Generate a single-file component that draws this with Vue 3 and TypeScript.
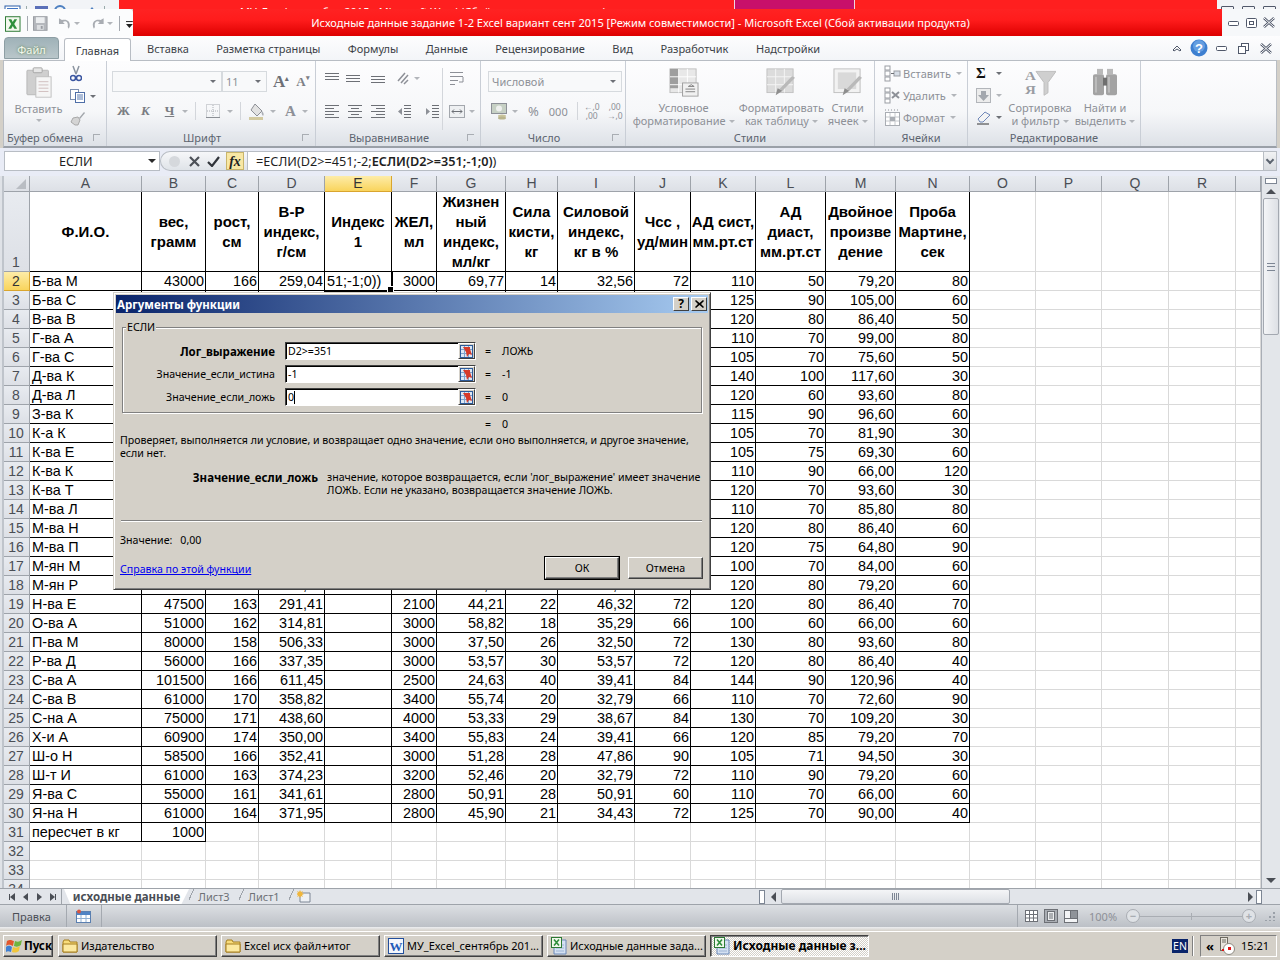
<template>
  <div class="app">
    <!-- окно позади -->
    <div class="back-strip">
      <div class="back-left">
        <svg width="119" height="9" viewBox="0 0 119 9">
          <rect x="5" y="3" width="15" height="8" fill="#fff" stroke="#2a5ca8" />
          <rect x="7" y="5" width="11" height="4" fill="#3f74c4" />
          <rect x="26" y="3" width="1" height="6" fill="#9aa" />
          <rect x="35" y="3" width="13" height="8" fill="#5a6fb8" />
          <circle cx="60" cy="8" r="5" fill="none" stroke="#4c7fc0" stroke-width="2" />
          <path d="M88 9l4-5 4 5z" fill="#4c7fc0" />
          <rect x="104" y="3" width="1" height="6" fill="#9aa" />
        </svg>
      </div>
      <div class="back-red">
        <span class="back-title">МУ_Excel_сентябрь 2015  -  Microsoft Word (Сбой активации продукта)</span>
        <div class="back-pink"></div>
      </div>
      <div class="back-right"><span></span><span></span><span></span></div>
    </div>

    <!-- заголовок окна -->
    <div class="titlebar">
      <div class="qat">
        <svg class="xl-logo" width="16" height="16" viewBox="0 0 16 16">
          <rect x="0.5" y="0.5" width="15" height="15" fill="#f3f8ee" stroke="#2c7a34" />
          <path d="M3.5 3h3l1.5 3 1.6-3h2.9l-3 5 3 5H9.700L8 10 6.400 13h-3l3-5z" fill="#2f8f3c" />
        </svg>
        <i class="qat-sep"></i>
        <svg width="15" height="15" viewBox="0 0 15 15">
          <rect x="0.5" y="0.5" width="14" height="14" fill="#b4b7bc" stroke="#9a9da3" />
          <rect x="3" y="1" width="9" height="6" fill="#eceef0" />
          <rect x="4" y="9" width="7" height="5" fill="#dcdee1" />
          <rect x="8" y="10" width="2" height="3" fill="#9a9da3" />
        </svg>
        <svg class="qat-undo" width="13" height="13" viewBox="0 0 13 13">
          <path d="M1 1v6h6L5 5c3-2 6 0 5 5l1 2c3-5 0-11-7-9z" fill="#a9adb3" />
        </svg>
        <i class="dd small"></i>
        <svg class="qat-redo" width="13" height="13" viewBox="0 0 13 13">
          <path d="M12 1v6H6l2-2C5 3 2 5 3 10l-1 2C-1 7 2 1 9 3z" fill="#a9adb3" />
        </svg>
        <i class="dd small"></i>
        <i class="qat-sep"></i>
        <svg width="7" height="8" viewBox="0 0 7 8"><rect y="1" width="7" height="1" fill="#222" /><path d="M0 4h7L3.500 8z" fill="#222" /></svg>
      </div>
      <div class="title-red">Исходные данные задание 1-2 Excel вариант сент 2015  [Режим совместимости]  -  Microsoft Excel (Сбой активации продукта)</div>
      <div class="winbtns">
        <svg width="12" height="8" viewBox="0 0 12 8"><rect x="0.5" y="2.500" width="10" height="4" rx="1" fill="#fff" stroke="#50586a" /></svg>
        <svg width="11" height="10" viewBox="0 0 11 10"><rect x="0.5" y="0.500" width="10" height="9" rx="1" fill="#fff" stroke="#50586a" /><rect x="3.500" y="3.500" width="4" height="3" fill="none" stroke="#50586a" /></svg>
        <svg width="12" height="11" viewBox="0 0 12 11"><path d="M1 1l10 9M11 1L1 10" stroke="#50586a" stroke-width="2.500" /><path d="M1 1l10 9M11 1L1 10" stroke="#fff" stroke-width="1" /></svg>
      </div>
    </div>

    <!-- вкладки ленты -->
    <div class="tabs">
      <div class="tab-file">Файл</div>
      <div class="tab-home">Главная</div>
      <div class="tab-list">
        <span v-for="t in ribbonTabs" :key="t">{{ t }}</span>
      </div>
      <div class="tab-tools">
        <svg width="10" height="8" viewBox="0 0 10 8"><path d="M1 6l4-4 4 4-1 1-3-2-3 2z" fill="#fff" stroke="#50586a" /></svg>
        <svg class="tt-help" width="18" height="18" viewBox="0 0 18 18">
          <circle cx="9" cy="9" r="8.500" fill="#3d7fd0" />
          <circle cx="9" cy="7" r="6" fill="#7fb3ec" opacity="0.6" />
          <text x="9" y="14" text-anchor="middle" class="help-q">?</text>
        </svg>
        <svg width="11" height="7" viewBox="0 0 11 7"><rect x="0.5" y="1.500" width="10" height="4" rx="1" fill="#fff" stroke="#50586a" /></svg>
        <svg width="11" height="11" viewBox="0 0 11 11"><rect x="3.500" y="0.500" width="7" height="7" fill="#fff" stroke="#50586a" /><rect x="0.500" y="3.500" width="7" height="7" fill="#fff" stroke="#50586a" /></svg>
        <svg width="12" height="11" viewBox="0 0 12 11"><path d="M1 1l10 9M11 1L1 10" stroke="#50586a" stroke-width="2.500" /><path d="M1 1l10 9M11 1L1 10" stroke="#fff" stroke-width="1" /></svg>
      </div>
    </div>

    <!-- лента -->
    <div class="ribbon">
      <section class="group g-clip">
        <div class="g-body">
          <div class="paste">
            <svg width="26" height="31" viewBox="0 0 29 38" preserveAspectRatio="none">
              <rect x="1" y="4" width="24" height="30" rx="1" fill="#cfcfcf" stroke="#b4b4b4" />
              <rect x="8" y="1" width="10" height="6" rx="1" fill="#e6e6e6" stroke="#9f9f9f" />
              <rect x="11" y="12" width="17" height="25" fill="#f5f5f5" stroke="#bcbcbc" />
              <path d="M14 18h11M14 22h11M14 26h11M14 30h11" stroke="#cbb8b8" />
            </svg>
            <span>Вставить</span>
            <i class="dd small"></i>
          </div>
          <div class="clip-col">
            <svg width="12" height="17" viewBox="0 0 12 17">
              <path d="M3 1l3 8M9 1L6 9" stroke="#8b94a0" stroke-width="1.500" />
              <circle cx="3" cy="13" r="2.500" fill="none" stroke="#3a55a0" stroke-width="1.500" />
              <circle cx="9" cy="13" r="2.500" fill="none" stroke="#3a55a0" stroke-width="1.500" />
            </svg>
            <div class="row-dd">
              <svg width="15" height="14" viewBox="0 0 15 14">
                <rect x="0.500" y="0.500" width="8" height="10" fill="#fff" stroke="#7c8fb0" />
                <rect x="5.500" y="3.500" width="9" height="10" fill="#fff" stroke="#4f6fa8" />
                <path d="M7 6h6M7 8h6M7 10h6" stroke="#5a7ab0" />
              </svg>
              <i class="dd"></i>
            </div>
            <svg width="16" height="16" viewBox="0 0 16 16">
              <path d="M9 8l5-6 1 1-5 6z" fill="#a2a6ab" />
              <path d="M3 8l5-1 2 3-2 5H5l-4-3z" fill="#d4d4d4" stroke="#a8a8a8" />
            </svg>
          </div>
        </div>
        <div class="g-label left">Буфер обмена<i class="launch"></i></div>
      </section>

      <section class="group g-font">
        <div class="g-body col">
          <div class="f-row1">
            <div class="combo w-font"><i class="dd dark"></i></div>
            <div class="combo w-size"><span>11</span><i class="dd dark"></i></div>
            <span class="big-a">A<sup>▴</sup></span>
            <span class="small-a">A<sup>▾</sup></span>
          </div>
          <div class="f-row2">
            <b class="fb">Ж</b>
            <b class="fb fi">К</b>
            <b class="fb fu">Ч</b><i class="dd small ml1"></i>
            <i class="vsep"></i>
            <svg class="ml3" width="14" height="14" viewBox="0 0 14 14">
              <rect x="0.500" y="0.500" width="13" height="13" fill="none" stroke="#a9adb3" stroke-dasharray="1 1" />
              <path d="M7 1v12M1 7h12" stroke="#a9adb3" stroke-dasharray="1 1" />
              <path d="M0 13.500h14" stroke="#8b8f95" />
            </svg>
            <i class="dd small ml2"></i>
            <i class="vsep"></i>
            <svg class="ml1" width="16" height="17" viewBox="0 0 16 17">
              <path d="M6 1l7 7-5 5-6-6z" fill="#e2e2e2" stroke="#8d9097" />
              <path d="M13 8c2 2 2 4 1 5-1-1-2-3-1-5z" fill="#a9adb3" />
              <rect x="0" y="14" width="14" height="3" fill="#d2c9a0" />
            </svg>
            <i class="dd small"></i>
            <span class="font-color">A</span>
            <i class="dd small ml1"></i>
          </div>
        </div>
        <div class="g-label lb">Шрифт<i class="launch"></i></div>
      </section>

      <section class="group g-align">
        <div class="g-body al-wrap">
          <div class="al-main">
            <div class="al-row">
              <svg class="al" width="14" height="10" viewBox="0 0 14 10"><path d="M0 .5h14M0 3.500h14M0 6.500h14" stroke="#6d7076" /></svg>
              <svg class="ml7" width="14" height="10" viewBox="0 0 14 10"><path d="M0 2.500h14M0 5.500h14M0 8.500h14" stroke="#6d7076" /></svg>
              <svg class="ml11" width="14" height="10" viewBox="0 0 14 10"><path d="M0 3.500h14M0 6.500h14M0 9.500h14" stroke="#6d7076" /></svg>
              <svg class="ml11" width="16" height="14" viewBox="0 0 16 14"><path d="M2 10l7-8M5 12l7-8M8 13l4-4" stroke="#8d9097" stroke-width="1.500" /></svg>
              <i class="dd small ml2"></i>
            </div>
            <div class="al-row">
              <svg class="al" width="14" height="13" viewBox="0 0 14 13"><path d="M0 .5h14M0 3.500h9M0 6.500h14M0 9.500h9M0 12.500h14" stroke="#6d7076" /></svg>
              <svg class="ml9" width="14" height="13" viewBox="0 0 14 13"><path d="M0 .5h14M3 3.500h8M0 6.500h14M3 9.500h8M0 12.500h14" stroke="#6d7076" /></svg>
              <svg class="ml9" width="14" height="13" viewBox="0 0 14 13"><path d="M0 .5h14M5 3.500h9M0 6.500h14M5 9.500h9M0 12.500h14" stroke="#6d7076" /></svg>
              <svg class="ml12" width="14" height="13" viewBox="0 0 14 13"><path d="M7 .5h7M7 3.500h7M7 6.500h7M7 9.500h7M7 12.500h7" stroke="#6d7076" /><path d="M5 3L1 6.500 5 10z" fill="#8d9097" /></svg>
              <svg class="ml14" width="14" height="13" viewBox="0 0 14 13"><path d="M7 .5h7M7 3.500h7M7 6.500h7M7 9.500h7M7 12.500h7" stroke="#6d7076" /><path d="M1 3l4 3.500L1 10z" fill="#8d9097" /></svg>
            </div>
          </div>
          <i class="al-line"></i>
          <div class="al-side">
            <div class="al-row">
              <svg width="16" height="15" viewBox="0 0 16 15"><path d="M1 1.500h13M1 5.500h13M1 9.500h8M1 13.500h5" stroke="#8d9097" /><path d="M14 6v5h-4" fill="none" stroke="#8d9097" /></svg>
            </div>
            <div class="al-row">
              <svg width="16" height="13" viewBox="0 0 16 13"><rect x="0.500" y="0.500" width="15" height="12" fill="#eef0f2" stroke="#a3a7ad" /><path d="M3 6.500h10M3 6.500l2-2M3 6.500l2 2M13 6.500l-2-2M13 6.500l-2 2" stroke="#6d7076" /></svg>
              <i class="dd small ml4"></i>
            </div>
          </div>
        </div>
        <div class="g-label lb">Выравнивание<i class="launch"></i></div>
      </section>

      <section class="group g-num">
        <div class="g-body col">
          <div class="combo w-num"><span>Числовой</span><i class="dd dark"></i></div>
          <div class="n-row">
            <svg width="16" height="17" viewBox="0 0 16 17">
              <rect x="0.500" y="0.500" width="15" height="10" fill="#c6d0c4" stroke="#8d9097" />
              <circle cx="8" cy="5.500" r="3" fill="#eef0ee" />
              <ellipse cx="11" cy="13" rx="4" ry="1.500" fill="#c9c49c" />
              <ellipse cx="11" cy="15" rx="4" ry="1.500" fill="#b9b48c" />
            </svg>
            <i class="dd small"></i>
            <span class="n-pct">%</span>
            <span class="n-000">000</span>
            <i class="vsep n-vsep"></i>
            <span class="n-dec">←,0<br />,00</span>
            <span class="n-dec">,00<br />→,0</span>
          </div>
        </div>
        <div class="g-label lb">Число<i class="launch"></i></div>
      </section>

      <section class="group g-styles">
        <div class="g-body styles-row">
          <div class="big st1">
            <svg width="30" height="29" viewBox="0 0 31 33" preserveAspectRatio="none">
              <rect x="1" y="1" width="27" height="27" fill="#e8e8e8" stroke="#bdbdbd" />
              <rect x="1" y="1" width="9" height="22" fill="#9e9e9e" />
              <path d="M10 1v27M19 1v27M1 10h27M1 19h27" stroke="#fff" />
              <rect x="14" y="17" width="16" height="15" fill="#f1f1f1" stroke="#9e9e9e" />
              <path d="M20 21h6l-3-2zM17 24h10M17 27h10" stroke="#7f7f7f" fill="none" />
            </svg>
            <span>Условное<br />форматирование<i class="dd small in"></i></span>
          </div>
          <div class="big st2">
            <svg width="30" height="29" viewBox="0 0 31 33" preserveAspectRatio="none">
              <rect x="1" y="1" width="27" height="27" fill="#dcdcdc" stroke="#c0c0c0" />
              <path d="M1 10h27M1 19h27M10 1v27M19 1v27" stroke="#f5f5f5" />
              <path d="M30 11L17 26l-3-2L27 9z" fill="#b9b9b9" />
              <path d="M17 26l-7 5 2-8z" fill="#8e8e8e" />
            </svg>
            <span>Форматировать<br />как таблицу<i class="dd small in"></i></span>
          </div>
          <div class="big st3">
            <svg width="30" height="29" viewBox="0 0 31 33" preserveAspectRatio="none">
              <rect x="1" y="1" width="27" height="27" fill="#f2f2f2" stroke="#bdbdbd" />
              <rect x="5" y="5" width="19" height="19" fill="#d9d9d9" />
              <path d="M30 11L17 26l-3-2L27 9z" fill="#b9b9b9" />
              <path d="M17 26l-7 5 2-8z" fill="#8e8e8e" />
            </svg>
            <span>Стили<br />ячеек<i class="dd small in"></i></span>
          </div>
        </div>
        <div class="g-label">Стили</div>
      </section>

      <section class="group g-cells">
        <div class="g-body col cells-col">
          <div class="c-item">
            <svg width="17" height="17" viewBox="0 0 17 17"><rect x="1" y="1" width="5" height="4" fill="#fff" stroke="#9a9da3" /><rect x="1" y="6" width="5" height="5" fill="#fff" stroke="#9a9da3" /><rect x="1" y="12" width="5" height="4" fill="#fff" stroke="#9a9da3" /><rect x="10" y="6" width="6" height="5" fill="#d6dde6" stroke="#9a9da3" /><path d="M7 8.500h3" stroke="#6d7076" /></svg>
            <span>Вставить</span><i class="dd small"></i>
          </div>
          <div class="c-item">
            <svg width="17" height="17" viewBox="0 0 17 17"><rect x="1" y="1" width="5" height="4" fill="#fff" stroke="#9a9da3" /><rect x="1" y="6" width="5" height="5" fill="#fff" stroke="#9a9da3" /><rect x="1" y="12" width="5" height="4" fill="#fff" stroke="#9a9da3" /><path d="M8 5l7 6M15 5l-7 6" stroke="#8d9097" stroke-width="2" /></svg>
            <span>Удалить</span><i class="dd small"></i>
          </div>
          <div class="c-item">
            <svg width="17" height="17" viewBox="0 0 17 17"><rect x="1.500" y="3.500" width="14" height="13" fill="#fff" stroke="#a9adb3" /><path d="M6 4v12M11 4v12M2 8h13M2 12h13" stroke="#c5c8cc" /><rect x="6" y="8" width="5" height="4" fill="#a9adb3" /><path d="M1 1h15" stroke="#8d9097" stroke-dasharray="1 2" /></svg>
            <span>Формат</span><i class="dd small"></i>
          </div>
        </div>
        <div class="g-label">Ячейки</div>
      </section>

      <section class="group g-edit">
        <div class="g-body edit-row">
          <div class="edit-col">
            <div class="row-dd"><span class="sigma">Σ</span><i class="dd dark"></i></div>
            <div class="row-dd">
              <svg width="15" height="15" viewBox="0 0 15 15"><rect x="0.500" y="0.500" width="14" height="14" fill="#ececec" stroke="#b2b5ba" /><path d="M5 3h5v4h3l-5.500 6L2 7h3z" fill="#a3a7ad" /></svg>
              <i class="dd small"></i>
            </div>
            <div class="row-dd">
              <svg width="15" height="15" viewBox="0 0 15 15"><path d="M2 9l7-7 5 3-7 7H4z" fill="#f4f4f4" stroke="#6f87b8" /><path d="M1 14h12" stroke="#333" /></svg>
              <i class="dd dark"></i>
            </div>
          </div>
          <div class="big ed1">
            <svg width="32" height="29" viewBox="0 0 32 34" preserveAspectRatio="none">
              <text x="1" y="14" class="sort-a">А</text>
              <text x="1" y="31" class="sort-a">Я</text>
              <path d="M12 4h20L24 17v12l-4 3V17z" fill="#cfcfcf" stroke="#bcbcbc" />
            </svg>
            <span>Сортировка<br />и фильтр<i class="dd small in"></i></span>
          </div>
          <div class="big ed2">
            <svg width="30" height="29" viewBox="0 0 30 33" preserveAspectRatio="none">
              <rect x="7" y="1" width="6" height="6" fill="#b9b9b9" />
              <rect x="17" y="1" width="6" height="6" fill="#b9b9b9" />
              <rect x="3" y="7" width="11" height="24" rx="2" fill="#a3a3a3" />
              <rect x="16" y="7" width="11" height="24" rx="2" fill="#a3a3a3" />
              <rect x="13" y="11" width="4" height="9" fill="#6f6f6f" />
              <path d="M6 10v18M19 10v18" stroke="#d8d8d8" />
            </svg>
            <span>Найти и<br />выделить<i class="dd small in"></i></span>
          </div>
        </div>
        <div class="g-label">Редактирование</div>
      </section>
    </div>

    <!-- строка формул -->
    <div class="formula-bar">
      <div class="name-box"><span>ЕСЛИ</span><i class="dd black"></i></div>
      <div class="fx-tools">
        <span class="fx-knob"></span>
        <svg width="11" height="11" viewBox="0 0 11 11"><path d="M1 1l9 9M10 1l-9 9" stroke="#4d5158" stroke-width="2.200" /></svg>
        <svg class="fx-ok" width="13" height="11" viewBox="0 0 13 11"><path d="M1 6l4 4 7-9" fill="none" stroke="#30343a" stroke-width="2.200" /></svg>
        <span class="fx-btn">fx</span>
      </div>
      <div class="formula-text">=ЕСЛИ(D2&gt;=451;-2;<b>ЕСЛИ(D2&gt;=351;-1;0)</b>)</div>
      <div class="formula-exp"><i class="chev"></i></div>
    </div>

    <!-- лист -->
    <div class="sheet-area">
      <div class="frame-left"></div>
      <div class="sheet">
        <div class="ch corner"><i></i></div>
        <div v-for="(c, i) in columns" :key="c" class="ch" :class="{ active: i === 4 }">{{ c }}</div>

        <div class="rh tall"><span>1</span></div>
        <div v-for="(h, i) in headers" :key="'h' + i" class="cell head">{{ h }}</div>
        <div v-for="i in 5" :key="'e1' + i" class="cell"></div>

        <template v-for="(row, r) in tableRows" :key="r">
          <div class="rh" :class="{ active: r === 0 }">{{ r + 2 }}</div>
          <div
            v-for="(v, c) in row.cells"
            :key="c"
            class="cell"
            :class="{ boxed: row.boxed > c, num: c > 0, edit: r === 0 && c === 4 }"
          >
            <template v-if="r === 0 && c === 4">
              <span class="edit-text">51;-1;0))</span><i class="handle"></i>
            </template>
            <template v-else>{{ v }}</template>
          </div>
        </template>
      </div>
      <div class="vscroll">
        <i class="split-v"></i>
        <i class="arr up"></i>
        <div class="vthumb"><i></i></div>
        <div class="vtrack"></div>
        <i class="arr down"></i>
      </div>
    </div>

    <!-- ярлыки листов -->
    <div class="sheet-tabs">
      <div class="nav-btns">
        <i class="nav first"></i><i class="nav prev"></i><i class="nav next"></i><i class="nav last"></i>
      </div>
      <div class="stab active">исходные данные</div>
      <div class="stab s3">Лист3</div>
      <div class="stab s1">Лист1</div>
      <div class="stab snew">
        <svg width="15" height="14" viewBox="0 0 15 14">
          <path d="M3 4h10v9H3z" fill="#eef1f5" stroke="#7d8694" />
          <path d="M3 1l1 2 2-1-1 2 2 1-2 1 1 2-2-1-1 2-1-2-2 1 1-2-2-1 2-1-1-2 2 1z" fill="#f0b63c" />
        </svg>
      </div>
      <div class="hscroll">
        <i class="split-h"></i>
        <i class="harr left"></i>
        <div class="hthumb"><i></i></div>
        <div class="htrack"></div>
        <i class="harr right"></i>
        <i class="split-h"></i>
      </div>
    </div>

    <!-- строка состояния -->
    <div class="statusbar">
      <span class="st-text">Правка</span>
      <i class="st-sep"></i>
      <svg class="st-macro" width="15" height="14" viewBox="0 0 15 14">
        <rect x="0.500" y="2.500" width="14" height="11" fill="#fff" stroke="#5a7fb0" />
        <rect x="1" y="3" width="13" height="3" fill="#4f83c4" />
        <path d="M5 6v7M10 6v7M1 9.500h13" stroke="#8fb0d4" />
        <circle cx="3" cy="2.500" r="2" fill="#d9553f" />
      </svg>
      <i class="st-sep"></i>
      <i class="st-fill"></i>
      <i class="st-sep"></i>
      <div class="views">
        <svg width="13" height="12" viewBox="0 0 13 12"><rect x="0.500" y="0.500" width="12" height="11" fill="#fff" stroke="#6d7076" /><path d="M4.500 1v10M8.500 1v10M1 4.500h11M1 8h11" stroke="#6d7076" /></svg>
        <svg class="v-on" width="14" height="14" viewBox="0 0 14 14"><rect x="0.500" y="0.500" width="13" height="13" fill="#a9adb3" stroke="#6d7076" /><rect x="3.500" y="2.500" width="7" height="9" fill="#eceef0" stroke="#6d7076" /><path d="M5 5h4M5 7h4M5 9h4" stroke="#6d7076" /></svg>
        <svg width="14" height="13" viewBox="0 0 14 13"><rect x="0.500" y="0.500" width="13" height="12" fill="#f3f4f6" stroke="#6d7076" /><path d="M0 8.500h14M6.500 1v7" stroke="#6d7076" /><rect x="7" y="1" width="6" height="7" fill="#8f9399" /></svg>
      </div>
      <span class="zoom-text">100%</span>
      <div class="zoom">
        <span class="zbtn">−</span>
        <div class="ztrack"><i></i></div>
        <span class="zbtn">+</span>
      </div>
      <svg class="grip" width="10" height="10" viewBox="0 0 10 10"><path d="M8 1h2v2H8zM4 5h2v2H4zM8 5h2v2H8zM0 9h2v1H0zM4 9h2v1H4zM8 9h2v1H8z" fill="#9aa0a8" /></svg>
    </div>
    <div class="win-bottom"></div>

    <!-- панель задач -->
    <div class="taskbar">
      <div class="start">
        <svg width="17" height="16" viewBox="0 0 17 16">
          <path d="M1 3c3-2 4-1 7 0L7 8C4 7 3 6 0 8z" fill="#e2572c" />
          <path d="M9 3c3 1 4 1 7-1l-1 5c-3 2-4 2-7 1z" fill="#6fb43f" />
          <path d="M0 9c3-2 4-1 6 0l-1 5c-3-1-4-1-6 1z" fill="#3e7fd2" />
          <path d="M7 9c3 1 4 1 7-1l-1 5c-3 2-4 2-7 1z" fill="#f0c53a" />
        </svg>
        <b>Пуск</b>
      </div>
      <div v-for="t in taskButtons" :key="t.label" class="task" :class="{ 'task-on': t.active }" :style="{ width: t.width + 'px' }">
        <svg v-if="t.icon === 'folder'" width="16" height="14" viewBox="0 0 16 14">
          <path d="M1 3l1-2h5l1 2h7v10H1z" fill="#f8dc7a" stroke="#a67f1f" />
          <path d="M1 5h14v8H1z" fill="#fce9a0" stroke="#a67f1f" />
        </svg>
        <svg v-else-if="t.icon === 'word'" width="16" height="16" viewBox="0 0 16 16">
          <rect x="0.500" y="0.500" width="15" height="15" fill="#f4f7fc" stroke="#234f9c" />
          <text x="8" y="13" text-anchor="middle" class="word-w">W</text>
        </svg>
        <svg v-else width="16" height="18" viewBox="0 0 16 18">
          <path d="M3 3h12v14H3z" fill="#d4e1f2" stroke="#6a88b8" />
          <path d="M5 8h8M5 11h8M5 14h8" stroke="#9db4d4" />
          <rect x="0.500" y="0.500" width="10" height="10" fill="#f1f8ec" stroke="#2c7a34" />
          <path d="M3 2.500l5 6M8 2.500l-5 6" stroke="#2f8f3c" stroke-width="1.600" />
        </svg>
        <span>{{ t.label }}</span>
      </div>
      <div class="tray-gap">
        <span class="lang">EN</span>
        <i class="tray-sep"></i>
      </div>
      <div class="tray">
        <b class="chevrons">«</b>
        <svg width="17" height="18" viewBox="0 0 17 18">
          <rect x="1.500" y="0.500" width="7" height="13" fill="#e7e4dc" stroke="#6d6a60" />
          <path d="M3 3h4M3 5h4" stroke="#6d6a60" />
          <circle cx="10" cy="12" r="5.500" fill="#fff" stroke="#8d8a80" />
          <rect x="9" y="10" width="3" height="3" fill="#e01414" />
          <rect x="3" y="12" width="2" height="2" fill="#e01414" />
        </svg>
        <span>15:21</span>
      </div>
    </div>

    <!-- диалог -->
    <div class="dialog">
      <div class="dlg-title">
        <b>Аргументы функции</b>
        <span class="cap-btn">?</span>
        <span class="cap-btn x">
          <svg width="9" height="8" viewBox="0 0 9 8"><path d="M1 0l3.500 3L8 0l1 1-3 3 3 3-1 1-3.500-3L1 8 0 7l3-3-3-3z" fill="#000" /></svg>
        </span>
      </div>
      <div class="dlg-group">
        <span class="legend">ЕСЛИ</span>
        <div v-for="a in args" :key="a.label" class="arg">
          <label :class="{ strong: a.strong }">{{ a.label }}</label>
          <div class="arg-input">
            <span class="arg-val">{{ a.value }}<i v-if="a.caret" class="caret"></i></span>
            <span class="ref-btn">
              <svg width="13" height="13" viewBox="0 0 13 13">
                <rect x="0.500" y="0.500" width="12" height="12" fill="#dce8f6" stroke="#2b5a9a" />
                <path d="M1 4.500h11M1 8.500h11M4.500 1v11M8.500 1v11" stroke="#7fa3cc" />
                <path d="M3 2h7v2l2 6-3-1-2 3-1-5z" fill="#d63a2a" />
              </svg>
            </span>
          </div>
          <span class="eq">=</span>
          <span class="res">{{ a.result }}</span>
        </div>
      </div>
      <div class="total"><span class="eq">=</span><span class="res">0</span></div>
      <p class="dlg-desc">Проверяет, выполняется ли условие, и возвращает одно значение, если оно выполняется, и другое значение, если нет.</p>
      <div class="dlg-help">
        <b>Значение_если_ложь</b>
        <p>значение, которое возвращается, если 'лог_выражение' имеет значение ЛОЖЬ. Если не указано, возвращается значение ЛОЖЬ.</p>
      </div>
      <div class="dlg-sep"></div>
      <div class="dlg-value"><span>Значение:</span><span>0,00</span></div>
      <div class="dlg-foot">
        <a>Справка по этой функции</a>
        <button class="btn default">ОК</button>
        <button class="btn">Отмена</button>
      </div>
    </div>
  </div>
</template>

<script setup lang="ts">
const ribbonTabs = ['Вставка', 'Разметка страницы', 'Формулы', 'Данные', 'Рецензирование', 'Вид', 'Разработчик', 'Надстройки']
const columns = ['A', 'B', 'C', 'D', 'E', 'F', 'G', 'H', 'I', 'J', 'K', 'L', 'M', 'N', 'O', 'P', 'Q', 'R', '']

const headers = [
  'Ф.И.О.',
  'вес,\nграмм',
  'рост,\nсм',
  'В-Р\nиндекс,\nг/см',
  'Индекс\n1',
  'ЖЕЛ,\nмл',
  'Жизнен\nный\nиндекс,\nмл/кг',
  'Сила\nкисти,\nкг',
  'Силовой\nиндекс,\nкг в %',
  'Чсс ,\nуд/мин',
  'АД сист,\nмм.рт.ст',
  'АД\nдиаст,\nмм.рт.ст',
  'Двойное\nпроизве\nдение',
  'Проба\nМартине,\nсек',
]

// под диалогом значения не видны, там пусто
const blank = ['', '', '', '', '', '', '', '', '']
const rawRows: string[][] = [
  ['Б-ва М', '43000', '166', '259,04', '', '3000', '69,77', '14', '32,56', '72', '110', '50', '79,20', '80'],
  ['Б-ва С', ...blank, '125', '90', '105,00', '60'],
  ['В-ва В', ...blank, '120', '80', '86,40', '50'],
  ['Г-ва А', ...blank, '110', '70', '99,00', '80'],
  ['Г-ва С', ...blank, '105', '70', '75,60', '50'],
  ['Д-ва К', ...blank, '140', '100', '117,60', '30'],
  ['Д-ва Л', ...blank, '120', '60', '93,60', '80'],
  ['З-ва К', ...blank, '115', '90', '96,60', '60'],
  ['К-а К', ...blank, '105', '70', '81,90', '30'],
  ['К-ва Е', ...blank, '105', '75', '69,30', '60'],
  ['К-ва К', ...blank, '110', '90', '66,00', '120'],
  ['К-ва Т', ...blank, '120', '70', '93,60', '30'],
  ['М-ва Л', ...blank, '110', '70', '85,80', '80'],
  ['М-ва Н', ...blank, '120', '80', '86,40', '60'],
  ['М-ва П', ...blank, '120', '75', '64,80', '90'],
  ['М-ян М', ...blank, '100', '70', '84,00', '60'],
  ['М-ян Р', '71000', '160', '443,75', '', '3000', '42,25', '24', '33,80', '66', '120', '80', '79,20', '60'],
  ['Н-ва Е', '47500', '163', '291,41', '', '2100', '44,21', '22', '46,32', '72', '120', '80', '86,40', '70'],
  ['О-ва А', '51000', '162', '314,81', '', '3000', '58,82', '18', '35,29', '66', '100', '60', '66,00', '60'],
  ['П-ва М', '80000', '158', '506,33', '', '3000', '37,50', '26', '32,50', '72', '130', '80', '93,60', '80'],
  ['Р-ва Д', '56000', '166', '337,35', '', '3000', '53,57', '30', '53,57', '72', '120', '80', '86,40', '40'],
  ['С-ва А', '101500', '166', '611,45', '', '2500', '24,63', '40', '39,41', '84', '144', '90', '120,96', '40'],
  ['С-ва В', '61000', '170', '358,82', '', '3400', '55,74', '20', '32,79', '66', '110', '70', '72,60', '90'],
  ['С-на А', '75000', '171', '438,60', '', '4000', '53,33', '29', '38,67', '84', '130', '70', '109,20', '30'],
  ['Х-и А', '60900', '174', '350,00', '', '3400', '55,83', '24', '39,41', '66', '120', '85', '79,20', '70'],
  ['Ш-о Н', '58500', '166', '352,41', '', '3000', '51,28', '28', '47,86', '90', '105', '71', '94,50', '30'],
  ['Ш-т И', '61000', '163', '374,23', '', '3200', '52,46', '20', '32,79', '72', '110', '90', '79,20', '60'],
  ['Я-ва С', '55000', '161', '341,61', '', '2800', '50,91', '28', '50,91', '60', '110', '70', '66,00', '60'],
  ['Я-на Н', '61000', '164', '371,95', '', '2800', '45,90', '21', '34,43', '72', '125', '70', '90,00', '40'],
  ['пересчет в кг', '1000'],
  [], [], [],
]

// строка всегда на 19 колонок, boxed — сколько ячеек с чёрной рамкой
const tableRows = rawRows.map((cells) => ({
  boxed: cells.length,
  cells: [...cells, ...Array(19 - cells.length).fill('')] as string[],
}))

const args = [
  { label: 'Лог_выражение', value: 'D2>=351', result: 'ЛОЖЬ', strong: true, caret: false },
  { label: 'Значение_если_истина', value: '-1', result: '-1', strong: false, caret: false },
  { label: 'Значение_если_ложь', value: '0', result: '0', strong: false, caret: true },
]

const taskButtons = [
  { label: 'Издательство', icon: 'folder', width: 159, active: false },
  { label: 'Excel исх файл+итог', icon: 'folder', width: 159, active: false },
  { label: 'МУ_Excel_сентябрь 201...', icon: 'word', width: 159, active: false },
  { label: 'Исходные данные зада...', icon: 'excel', width: 159, active: false },
  { label: 'Исходные данные з...', icon: 'excel', width: 159, active: true },
]
</script>

<style>
html,
body {
  margin: 0;
  background: #d4d0c8;
  overflow: hidden;
}
</style>

<style scoped>
.app {
  position: relative;
  width: 1280px;
  height: 960px;
  overflow: hidden;
  background: #d4d0c8;
  font-family: "Noto Sans", "Liberation Sans", sans-serif;
  font-size: 11px;
  color: #3b3f46;
}

i {
  display: block;
  font-style: normal;
}

.ml1 { margin-left: 1px; }
.ml2 { margin-left: 2px; }
.ml3 { margin-left: 3px; }
.ml4 { margin-left: 4px; }
.ml7 { margin-left: 7px; }
.ml9 { margin-left: 9px; }
.ml11 { margin-left: 11px; }
.ml12 { margin-left: 12px; }
.ml14 { margin-left: 14px; }

/* окно позади */
.back-strip {
  display: flex;
  height: 9px;
  overflow: hidden;
  background: #f2f4f7;
}
.back-left {
  width: 119px;
  height: 9px;
}
.back-red {
  position: relative;
  width: 1103px;
  background: #ff1f1f;
  color: #fff;
  overflow: hidden;
}
.back-title {
  position: absolute;
  left: 121px;
  top: 4px;
  white-space: pre;
}
.back-pink {
  position: absolute;
  left: 615px;
  top: 0;
  width: 121px;
  height: 9px;
  background: #c8106a;
  border: 1px solid #f0d8e0;
  border-width: 0 1px;
  box-sizing: border-box;
}
.back-right {
  flex: 1;
  display: flex;
  gap: 8px;
  padding: 6px 4px 0 4px;
}
.back-right span {
  width: 11px;
  height: 4px;
  border: 1px solid #50586a;
  border-radius: 1px;
}

/* заголовок */
.titlebar {
  display: flex;
  height: 27px;
}
.qat {
  width: 133px;
  box-sizing: border-box;
  background: #fbfcfd;
  border-radius: 0 4px 0 0;
  display: flex;
  align-items: center;
  padding: 2px 0 0 5px;
  gap: 3px;
}
.qat-sep {
  width: 1px;
  height: 15px;
  background: #a4a9b0;
  margin: 0 3px;
}
.qat-undo {
  margin-left: 7px;
}
.qat-redo {
  margin-left: 9px;
}
.title-red {
  flex: 1;
  text-align: center;
  padding-right: 74px;
  line-height: 28px;
  color: #fff;
  white-space: pre;
  background: linear-gradient(#ff2222 0, #ff1c1c 40%, #dd0000 100%);
}
.winbtns {
  width: 58px;
  box-sizing: border-box;
  background: #f6f8fa;
  display: flex;
  align-items: center;
  justify-content: center;
  gap: 6px;
}

/* вкладки */
.tabs {
  display: flex;
  align-items: flex-end;
  height: 24px;
  background: linear-gradient(#fdfdfe, #f3f5f8);
  padding-left: 4px;
  box-sizing: border-box;
}
.tab-file {
  width: 55px;
  height: 22px;
  line-height: 23px;
  text-align: center;
  border-radius: 4px 4px 0 0;
  margin-bottom: 1px;
  background: linear-gradient(#9fb2b8, #b9c6ca);
  border: 1px solid #8d9ea4;
  box-sizing: border-box;
  color: #f4f8ee;
  text-shadow: 0 0 3px #4f7a3a;
}
.tab-home {
  width: 67px;
  margin-left: 5px;
  height: 23px;
  line-height: 23px;
  text-align: center;
  box-sizing: border-box;
  background: #fff;
  border: 1px solid #b8bdc4;
  border-bottom: none;
  border-radius: 3px 3px 0 0;
  position: relative;
  top: 1px;
  z-index: 1;
}
.tab-list {
  display: flex;
  gap: 27.5px;
  padding-left: 16px;
  line-height: 23px;
  height: 23px;
  white-space: nowrap;
}
.tab-tools {
  margin-left: auto;
  display: flex;
  align-items: center;
  height: 24px;
  gap: 11px;
  padding-right: 8px;
}
.tt-help {
  margin: 0 -3px;
}

/* лента */
.ribbon {
  display: flex;
  height: 88px;
  margin: 0 3px 0 3px;
  box-sizing: border-box;
  border: 1px solid #b8bdc4;
  border-bottom: 2px solid #9aa0a8;
  background: linear-gradient(#fdfdfe 0, #f6f7f9 60%, #dde1e7 100%);
  color: #8d9097;
}
.group {
  display: flex;
  flex-direction: column;
  box-sizing: border-box;
  border-right: 1px solid #c9ced6;
}
.g-clip { width: 103px; }
.g-font { width: 209px; }
.g-align { width: 165px; }
.g-num { width: 145px; }
.g-styles { width: 249px; }
.g-cells { width: 93px; }
.g-edit { width: 173px; }
.g-body {
  height: 71px;
  box-sizing: border-box;
}
.g-label {
  position: relative;
  height: 15px;
  line-height: 14px;
  text-align: center;
  color: #5c6470;
}
.g-label.left {
  text-align: left;
  padding-left: 3px;
}
.g-label.lb {
  padding-right: 18px;
}
.launch {
  position: absolute;
  right: 6px;
  top: 3px;
  width: 6px;
  height: 6px;
  border: 1px solid #a9adb3;
  border-width: 1px 0 0 1px;
}
.col {
  display: flex;
  flex-direction: column;
}

.dd {
  width: 0;
  height: 0;
  border-left: 3px solid transparent;
  border-right: 3px solid transparent;
  border-top: 3px solid #6d7076;
}
.dd.small {
  border-top-color: #b2b5ba;
}
.dd.black {
  border-left-width: 4px;
  border-right-width: 4px;
  border-top: 4px solid #2a2a2a;
}
.dd.in {
  display: inline-block;
  margin-left: 3px;
  vertical-align: 2px;
}
.row-dd {
  display: flex;
  align-items: center;
  gap: 5px;
}

/* буфер */
.g-clip .g-body {
  display: flex;
}
.paste {
  width: 64px;
  display: flex;
  flex-direction: column;
  align-items: center;
  padding: 6px 0 0 5px;
  box-sizing: border-box;
}
.paste span {
  line-height: 15px;
  margin-top: 3px;
}
.paste .dd {
  margin-top: 3px;
}
.clip-col {
  display: flex;
  flex-direction: column;
  align-items: flex-start;
  gap: 7px;
  padding: 4px 0 0 2px;
}

/* шрифт */
.f-row1 {
  display: flex;
  align-items: center;
  padding: 10px 0 0 5px;
}
.combo {
  height: 21px;
  box-sizing: border-box;
  border: 1px solid #d6dade;
  background: #f8f9fa;
  display: flex;
  align-items: center;
  justify-content: space-between;
  padding: 0 5px 0 3px;
  color: #8d9097;
}
.w-font { width: 110px; justify-content: flex-end; }
.w-size { width: 45px; }
.w-num {
  width: 134px;
  margin: 10px 0 0 7px;
}
.big-a {
  font-size: 17px;
  font-family: "Liberation Serif", serif;
  margin-left: 6px;
  font-weight: bold;
  color: #6d7076;
  line-height: 1;
}
.small-a {
  font-size: 13px;
  font-family: "Liberation Serif", serif;
  margin-left: 7px;
  font-weight: bold;
  color: #7d8086;
}
.big-a sup,
.small-a sup {
  font-size: 7px;
  vertical-align: 6px;
  line-height: 0;
}
.f-row2 {
  display: flex;
  align-items: center;
  height: 20px;
  margin-top: 9px;
  padding-left: 10px;
  gap: 5px;
}
.fb {
  font-family: "Liberation Serif", serif;
  font-size: 13px;
  width: 13px;
  text-align: center;
  color: #7a7d83;
}
.fi {
  font-style: italic;
  margin-left: 4px;
}
.fu {
  text-decoration: underline;
  margin-left: 6px;
}
.vsep {
  width: 1px;
  height: 18px;
  background: #d3d6db;
  margin: 0 2px;
}
.font-color {
  font-family: "Liberation Serif", serif;
  font-weight: bold;
  font-size: 15px;
  color: #8d9097;
  margin-left: 4px;
}

/* выравнивание */
.al-wrap {
  display: flex;
  padding: 7px 0 0 9px;
}
.al-main {
  width: 117px;
  display: flex;
  flex-direction: column;
  gap: 13px;
}
.al-side {
  display: flex;
  flex-direction: column;
  gap: 13px;
  padding-left: 6px;
}
.al-line {
  width: 1px;
  height: 62px;
  background: #d3d6db;
}
.al-row {
  display: flex;
  align-items: center;
  height: 20px;
}

/* число */
.n-row {
  display: flex;
  align-items: center;
  height: 20px;
  margin-top: 9px;
  padding-left: 10px;
  gap: 5px;
}
.n-pct { margin-left: 5px; font-size: 13px; }
.n-000 { margin-left: 5px; }
.n-vsep { margin: 0 0 0 4px; }
.n-dec {
  font-size: 8.5px;
  line-height: 9px;
  width: 18px;
  text-align: center;
  white-space: nowrap;
}

/* стили */
.styles-row {
  display: flex;
}
.big {
  display: flex;
  flex-direction: column;
  align-items: center;
  padding-top: 7px;
  box-sizing: border-box;
  white-space: nowrap;
  text-align: center;
}
.big svg {
  margin-bottom: 4px;
}
.big span {
  line-height: 13px;
}
.st1 { width: 116px; }
.st2 { width: 80px; }
.st3 { width: 53px; }

/* ячейки */
.cells-col {
  padding: 4px 0 0 9px;
  gap: 5px;
}
.c-item {
  display: flex;
  align-items: center;
  height: 17px;
  gap: 2px;
}
.c-item .dd {
  margin-left: 3px;
}

/* редактирование */
.edit-row {
  display: flex;
}
.edit-col {
  width: 34px;
  flex: none;
  padding: 4px 0 0 8px;
  box-sizing: border-box;
  display: flex;
  flex-direction: column;
  gap: 5px;
}
.edit-col .row-dd {
  height: 17px;
}
.sigma {
  font-family: "Liberation Serif", serif;
  font-weight: bold;
  font-size: 15px;
  color: #111;
  width: 15px;
}
.ed1 { width: 76px; }
.ed2 { width: 54px; }
.sort-a {
  font-family: "Liberation Serif", serif;
  font-size: 15px;
  font-weight: bold;
  fill: #9a9da3;
}

/* формула */
.formula-bar {
  display: flex;
  height: 28px;
  padding: 3px 3px 5px 4px;
  box-sizing: border-box;
  background: #e9ecf6;
  font-size: 12.7px;
  color: #1f1f1f;
}
.name-box {
  width: 156px;
  background: #fff;
  border: 1px solid #b8bdc4;
  box-sizing: border-box;
  display: flex;
  align-items: center;
  padding: 0 3px 0 54px;
  justify-content: space-between;
}
.fx-tools {
  width: 87px;
  display: flex;
  align-items: center;
  gap: 9px;
  padding-left: 3px;
  box-sizing: border-box;
  background: linear-gradient(#f6f7f9, #dfe3e8);
  border-radius: 10px 0 0 10px;
  border: 1px solid #b8bdc4;
  border-right: none;
}
.fx-knob {
  width: 11px;
  height: 11px;
  border-radius: 50%;
  background: #d5d8dc;
  margin: 0 0 0 5px;
}
.fx-ok {
  margin-left: -2px;
}
.fx-btn {
  width: 18px;
  height: 18px;
  margin-left: -3px;
  text-align: center;
  font-family: "Liberation Serif", serif;
  font-style: italic;
  font-weight: bold;
  font-size: 14px;
  line-height: 17px;
  background: #f8e7a4;
  border: 1px solid #c9b56a;
  box-sizing: border-box;
}
.formula-text {
  flex: 1;
  background: #fff;
  border: 1px solid #b8bdc4;
  border-right: none;
  padding-left: 8px;
  line-height: 18px;
  white-space: nowrap;
}
.formula-text b {
  font-weight: 600;
}
.formula-exp {
  width: 14px;
  background: linear-gradient(#f1f2f4, #d9dce0);
  border: 1px solid #b8bdc4;
  box-sizing: border-box;
  display: flex;
  align-items: center;
  justify-content: center;
}
.chev {
  width: 4px;
  height: 4px;
  border: 2px solid #5c6470;
  border-width: 0 2px 2px 0;
  transform: rotate(45deg);
  margin-top: -3px;
}

/* лист */
.sheet-area {
  display: flex;
  height: 712px;
  background: #fff;
}
.frame-left {
  width: 4px;
  background: #bfc4cb;
  border-left: 2px solid #dfe2e7;
  box-sizing: border-box;
}
.sheet {
  width: 1257px;
  height: 712px;
  overflow: hidden;
  display: grid;
  grid-template-columns: 26px 112px 64px 53px 66px 67px 45px 69px 52px 77px 56px 65px 70px 70px 74px 66px 66px 67px 67px 25px;
  grid-auto-rows: 19px;
  grid-template-rows: 16px 80px;
  font-family: "Liberation Sans", sans-serif;
  font-size: 14.4px;
  color: #000;
}
.ch,
.rh {
  box-sizing: border-box;
  background: linear-gradient(#e8ebf0, #dde0e6);
  border-right: 1px solid #9ea3aa;
  border-bottom: 1px solid #9ea3aa;
  text-align: center;
  color: #4a4e55;
  font-size: 14px;
  line-height: 16px;
}
.ch {
  line-height: 15px;
}
.rh {
  line-height: 19px;
  padding-right: 1px;
}
.corner {
  position: relative;
}
.corner i {
  position: absolute;
  right: 3px;
  bottom: 2px;
  width: 0;
  height: 0;
  border-left: 10px solid transparent;
  border-bottom: 10px solid #b9bdc3;
}
.ch.active,
.rh.active {
  background: linear-gradient(#fdeca8, #f9d45c);
  border-color: #d9a52e;
  color: #333;
}
.rh.tall {
  display: flex;
  align-items: flex-end;
  justify-content: center;
}
.rh.tall span {
  line-height: 18px;
}
.cell {
  box-sizing: border-box;
  border-right: 1px solid #d9d9d9;
  border-bottom: 1px solid #d9d9d9;
  line-height: 18px;
  white-space: nowrap;
  overflow: hidden;
  padding: 0 1px 0 2px;
}
.cell.num {
  text-align: right;
}
.cell.boxed,
.cell.head {
  border-color: #000;
}
.cell.head {
  font-weight: bold;
  font-size: 15px;
  white-space: pre-line;
  text-align: center;
  display: flex;
  align-items: center;
  justify-content: center;
  line-height: 20px;
  padding: 1px 0 0;
  overflow: visible;
}
.cell.edit {
  position: relative;
  overflow: visible;
  text-align: left;
  outline: 1px solid #000;
  padding: 0 0 0 2px;
  z-index: 2;
  background: #fff;
}
.handle {
  position: absolute;
  right: -3px;
  bottom: -3px;
  width: 5px;
  height: 5px;
  background: #000;
  border: 1px solid #fff;
}

/* вертикальная прокрутка */
.vscroll {
  width: 19px;
  box-sizing: border-box;
  background: #e3e6ea;
  border-left: 1px solid #a9aeb6;
  display: flex;
  flex-direction: column;
  align-items: center;
}
.split-v {
  width: 10px;
  height: 4px;
  margin: 2px 0;
  background: #fff;
  border: 1px solid #7d8694;
}
.arr {
  width: 0;
  height: 0;
  border-left: 5px solid transparent;
  border-right: 5px solid transparent;
}
.arr.up {
  border-bottom: 5px solid #4a4e55;
  margin: 3px 0 4px;
}
.arr.down {
  border-top: 5px solid #4a4e55;
  margin: 0 0 5px;
}
.vthumb {
  width: 16px;
  height: 137px;
  box-sizing: border-box;
  background: linear-gradient(90deg, #f4f5f7, #dde0e5);
  border: 1px solid #a3a8b0;
  border-radius: 2px;
  display: flex;
  align-items: center;
  justify-content: center;
}
.vthumb i {
  width: 8px;
  height: 6px;
  border-top: 1px solid #7d8694;
  border-bottom: 1px solid #7d8694;
  background: linear-gradient(#7d8694, #7d8694) center / 100% 1px no-repeat;
}
.vtrack {
  flex: 1;
}

/* ярлыки */
.sheet-tabs {
  display: flex;
  align-items: stretch;
  height: 16px;
  background: #e2e5ea;
  border-top: 1px solid #9ea3aa;
  box-sizing: border-box;
  padding-left: 4px;
}
.nav-btns {
  width: 58px;
  display: flex;
  align-items: center;
  justify-content: space-around;
  padding: 0 2px;
  box-sizing: border-box;
  border-right: 1px solid #9ea3aa;
}
.nav {
  width: 0;
  height: 0;
  border-top: 4px solid transparent;
  border-bottom: 4px solid transparent;
}
.nav.first,
.nav.prev {
  border-right: 5px solid #4a4e55;
}
.nav.next,
.nav.last {
  border-left: 5px solid #4a4e55;
}
.nav.first {
  box-shadow: -2px 0 0 -1px #4a4e55;
}
.nav.last {
  box-shadow: 2px 0 0 -1px #4a4e55;
}
.stab {
  height: 15px;
  line-height: 15px;
  box-sizing: border-box;
  text-align: center;
  white-space: nowrap;
}
.stab.active {
  width: 125px;
  margin-left: 2px;
  font-weight: bold;
  font-size: 11.5px;
  color: #4a4e55;
  background: #fff;
  clip-path: polygon(0 0, 100% 0, 94% 100%, 5% 100%);
}
.stab.s3,
.stab.s1 {
  width: 50px;
  color: #6d7076;
  background: linear-gradient(115deg, transparent 4px, #9ea3aa 4px, #9ea3aa 5px, transparent 5px);
}
.stab.snew {
  width: 40px;
  padding: 0 10px 0 0;
  background: linear-gradient(115deg, transparent 4px, #9ea3aa 4px, #9ea3aa 5px, transparent 5px);
}
.hscroll {
  margin-left: auto;
  width: 521px;
  display: flex;
  align-items: center;
  padding-right: 18px;
  box-sizing: border-box;
}
.split-h {
  width: 4px;
  height: 12px;
  background: #fff;
  border: 1px solid #7d8694;
}
.harr {
  width: 0;
  height: 0;
  border-top: 5px solid transparent;
  border-bottom: 5px solid transparent;
}
.harr.left {
  border-right: 5px solid #4a4e55;
  margin: 0 5px 0 6px;
}
.harr.right {
  border-left: 5px solid #4a4e55;
  margin: 0 3px 0 0;
}
.hthumb {
  width: 229px;
  height: 15px;
  box-sizing: border-box;
  background: linear-gradient(#f4f5f7, #dde0e5);
  border: 1px solid #a3a8b0;
  border-radius: 2px;
  display: flex;
  align-items: center;
  justify-content: center;
}
.hthumb i {
  width: 7px;
  height: 7px;
  background: repeating-linear-gradient(90deg, #7d8694 0, #7d8694 1px, transparent 1px, transparent 2px);
}
.htrack {
  flex: 1;
}

/* состояние */
.statusbar {
  display: flex;
  align-items: center;
  height: 23px;
  box-sizing: border-box;
  background: linear-gradient(#dcdfe3, #bcc0c6);
  border-top: 1px solid #9ea3aa;
  color: #4a4e55;
}
.st-text {
  margin-left: 12px;
  width: 54px;
}
.st-sep {
  width: 1px;
  height: 22px;
  background: #a4a9b0;
}
.st-macro {
  margin: 0 10px 0 9px;
}
.st-fill {
  flex: 1;
}
.views {
  display: flex;
  align-items: center;
  gap: 6px;
  margin-left: 7px;
}
.zoom-text {
  margin-left: 11px;
  width: 37px;
  color: #8d9097;
}
.zoom {
  display: flex;
  align-items: center;
  width: 130px;
}
.zbtn {
  width: 14px;
  height: 14px;
  border-radius: 50%;
  border: 1px solid #a9adb3;
  box-sizing: border-box;
  background: #dfe2e6;
  text-align: center;
  line-height: 11px;
  font-weight: bold;
  color: #a9adb3;
}
.ztrack {
  flex: 1;
  height: 1px;
  background: #a9adb3;
  position: relative;
}
.ztrack i {
  position: absolute;
  left: 50%;
  top: -3px;
  width: 1px;
  height: 7px;
  background: #a9adb3;
}
.grip {
  margin: 0 5px 0 9px;
}
.win-bottom {
  height: 4px;
  background: linear-gradient(#eceef1, #d4d0c8);
}

/* панель задач */
.taskbar {
  display: flex;
  align-items: center;
  height: 29px;
  padding: 2px 3px 3px;
  gap: 4px;
  box-sizing: border-box;
  background: #d4d0c8;
  border-top: 1px solid #fff;
  color: #000;
}
.start,
.task {
  height: 22px;
  box-sizing: border-box;
  display: flex;
  align-items: center;
  gap: 3px;
  padding-left: 3px;
  background: #d4d0c8;
  border: 1px solid;
  border-color: #fff #404040 #404040 #fff;
  box-shadow: inset -1px -1px 0 #808080;
  white-space: nowrap;
}
.start {
  width: 50px;
  padding-left: 2px;
  gap: 1px;
  margin-right: 1px;
}
.start b {
  font-size: 11.5px;
}
.task span {
  overflow: hidden;
}
.task-on {
  border-color: #404040 #fff #fff #404040;
  box-shadow: inset 1px 1px 0 #808080;
  background: repeating-conic-gradient(#fff 0 25%, #d4d0c8 0 50%) 0 0 / 2px 2px;
  font-weight: bold;
  font-size: 12px;
}
.word-w {
  font-family: "Liberation Serif", serif;
  font-weight: bold;
  font-size: 13px;
  fill: #1f5ab8;
}
.tray-gap {
  flex: 1;
  display: flex;
  align-items: center;
  justify-content: flex-end;
  gap: 4px;
  height: 22px;
}
.lang {
  width: 16px;
  height: 14px;
  line-height: 14px;
  text-align: center;
  background: #0a246a;
  color: #fff;
  font-size: 10.5px;
}
.tray-sep {
  width: 1px;
  height: 20px;
  background: #808080;
  border-right: 1px solid #fff;
  margin-right: 2px;
}
.tray {
  width: 77px;
  height: 22px;
  box-sizing: border-box;
  display: flex;
  align-items: center;
  border: 1px solid;
  border-color: #808080 #fff #fff #808080;
  padding-left: 5px;
  gap: 5px;
}
.chevrons {
  font-size: 13px;
}

/* диалог */
.dialog {
  position: absolute;
  left: 113px;
  top: 292px;
  width: 598px;
  height: 298px;
  box-sizing: border-box;
  background: #d4d0c8;
  border: 1px solid;
  border-color: #d4d0c8 #404040 #404040 #d4d0c8;
  box-shadow: inset 1px 1px 0 #fff, inset -1px -1px 0 #808080;
  padding: 2px;
  font-size: 10.6px;
  color: #000;
  z-index: 5;
}
.dlg-title {
  height: 18px;
  display: flex;
  align-items: center;
  gap: 2px;
  padding: 0 1px;
  background: linear-gradient(90deg, #0a246a, #a6caf0);
  color: #fff;
  font-size: 11.5px;
}
.dlg-title b {
  flex: 1;
}
.cap-btn {
  width: 16px;
  height: 14px;
  box-sizing: border-box;
  background: #d4d0c8;
  border: 1px solid;
  border-color: #fff #404040 #404040 #fff;
  color: #000;
  font-weight: bold;
  font-size: 12px;
  line-height: 12px;
  text-align: center;
}
.cap-btn.x {
  display: flex;
  align-items: center;
  justify-content: center;
}
.dlg-group {
  position: relative;
  width: 580px;
  height: 86px;
  margin: 14px 0 0 6px;
  box-sizing: border-box;
  border: 1px solid #808080;
  box-shadow: 1px 1px 0 #fff, inset 1px 1px 0 #fff;
  padding-top: 14px;
  display: flex;
  flex-direction: column;
  gap: 5px;
}
.legend {
  position: absolute;
  left: 3px;
  top: -7px;
  padding: 0 1px;
  background: #d4d0c8;
  line-height: 13px;
}
.arg {
  display: grid;
  grid-template-columns: 152px 191px 18px 1fr;
  height: 18px;
  align-items: center;
}
.arg label {
  text-align: right;
  white-space: nowrap;
}
.arg label.strong {
  font-weight: bold;
  font-size: 11.5px;
}
.arg-input {
  grid-column: 2;
  margin-left: 10px;
  width: 191px;
  height: 18px;
  box-sizing: border-box;
  background: #fff;
  border: 1px solid;
  border-color: #404040 #fff #fff #404040;
  box-shadow: 1px 1px 0 #d4d0c8, inset 1px 1px 0 #000;
  display: flex;
  align-items: center;
  justify-content: space-between;
  padding-left: 2px;
}
.arg-val {
  display: flex;
  align-items: center;
}
.caret {
  width: 1px;
  height: 13px;
  background: #000;
}
.ref-btn {
  width: 17px;
  height: 16px;
  box-sizing: border-box;
  background: #d4d0c8;
  border: 1px solid;
  border-color: #fff #404040 #404040 #fff;
  display: flex;
  align-items: center;
  justify-content: center;
}
.eq {
  width: 18px;
  text-align: center;
}
.arg .eq {
  margin-left: 13px;
}
.arg .res {
  margin-left: 18px;
}
.total {
  display: flex;
  align-items: center;
  height: 14px;
  margin: 4px 0 0 363px;
}
.total .res {
  margin-left: 5px;
}
.dlg-desc {
  margin: 3px 0 0 4px;
  width: 578px;
  line-height: 13px;
}
.dlg-help {
  display: grid;
  grid-template-columns: 198px 1fr;
  column-gap: 9px;
  margin: 11px 0 0 4px;
  line-height: 13px;
}
.dlg-help b {
  text-align: right;
  white-space: nowrap;
  font-size: 11.5px;
}
.dlg-help p {
  margin: 0;
  width: 376px;
}
.dlg-sep {
  height: 1px;
  margin: 23px 6px 0 5px;
  background: #808080;
  border-bottom: 1px solid #fff;
}
.dlg-value {
  display: flex;
  gap: 8px;
  margin: 12px 0 0 4px;
  line-height: 13px;
}
.dlg-foot {
  display: flex;
  align-items: center;
  margin: 10px 5px 0 4px;
  gap: 9px;
}
.dlg-foot a {
  flex: 1;
  padding-top: 2px;
  color: #0000ee;
  text-decoration: underline;
}
.btn {
  width: 75px;
  height: 22px;
  font: inherit;
  padding: 0;
  background: #d4d0c8;
  border: 1px solid;
  border-color: #fff #404040 #404040 #fff;
  box-shadow: inset -1px -1px 0 #808080;
  color: #000;
}
.btn.default {
  width: 74px;
  outline: 1px solid #000;
}
p {
  margin: 0;
}
.help-q {
  font-family: "Liberation Sans", sans-serif;
  font-weight: bold;
  font-size: 13px;
  fill: #fff;
}
</style>
